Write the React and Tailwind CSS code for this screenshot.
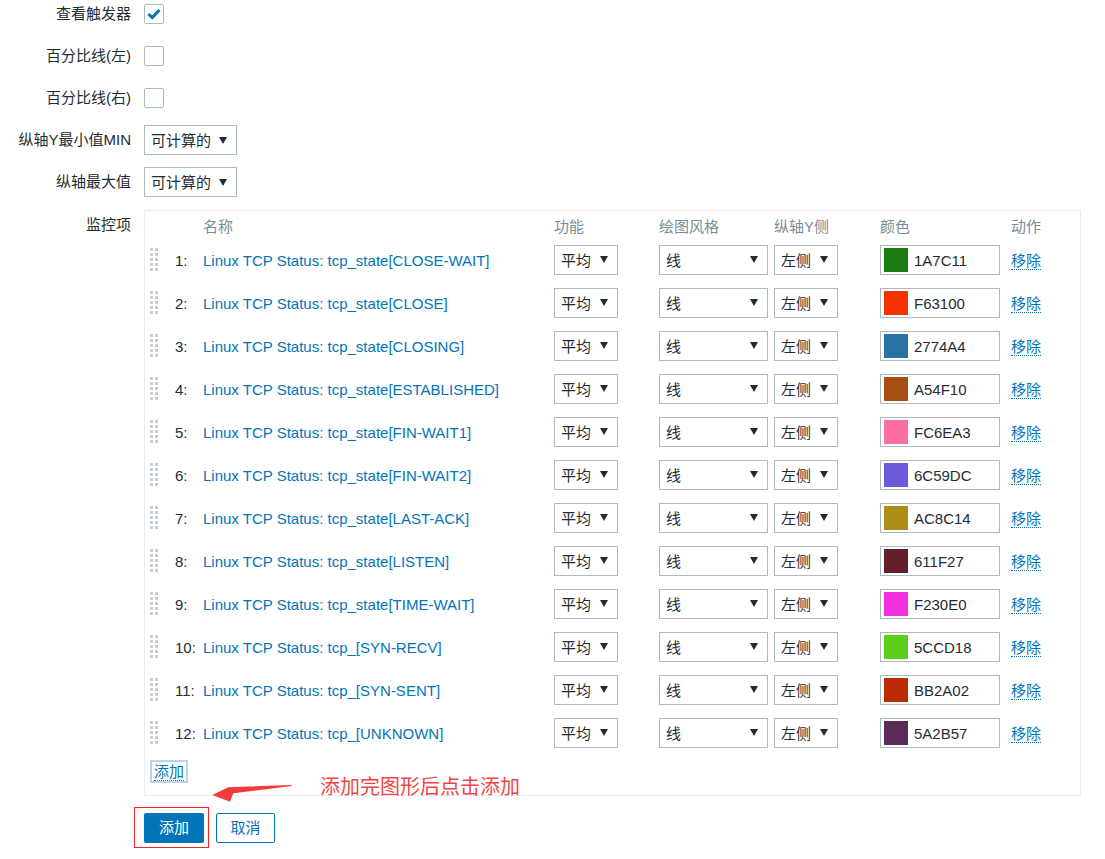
const ITEMS = [
  { n: 1, name: 'tcp_state[CLOSE-WAIT]', color: '1A7C11' },
  { n: 2, name: 'tcp_state[CLOSE]', color: 'F63100' },
  { n: 3, name: 'tcp_state[CLOSING]', color: '2774A4' },
  { n: 4, name: 'tcp_state[ESTABLISHED]', color: 'A54F10' },
  { n: 5, name: 'tcp_state[FIN-WAIT1]', color: 'FC6EA3' },
  { n: 6, name: 'tcp_state[FIN-WAIT2]', color: '6C59DC' },
  { n: 7, name: 'tcp_state[LAST-ACK]', color: 'AC8C14' },
  { n: 8, name: 'tcp_state[LISTEN]', color: '611F27' },
  { n: 9, name: 'tcp_state[TIME-WAIT]', color: 'F230E0' },
  { n: 10, name: 'tcp_[SYN-RECV]', color: '5CCD18' },
  { n: 11, name: 'tcp_[SYN-SENT]', color: 'BB2A02' },
  { n: 12, name: 'tcp_[UNKNOWN]', color: '5A2B57' },
]

function Arrow() {
  return (
    <svg width="8" height="7" viewBox="0 0 8 7" className="shrink-0">
      <polygon points="0,0 8,0 4,7" fill="#1f2c33" />
    </svg>
  )
}

function Select({ value, className }) {
  return (
    <div className={`flex h-[30px] items-center justify-between border border-[#acbbc2] bg-white pl-[6px] pr-[9px] text-[#1f2c33] ${className}`}>
      <span className="pt-[2px]">{value}</span>
      <Arrow />
    </div>
  )
}

function Checkbox({ checked }) {
  return (
    <div className="flex h-[20px] w-[20px] items-center justify-center rounded-[2px] border border-[#acbbc2] bg-white">
      {checked && (
        <svg width="14" height="12" viewBox="0 0 14 12">
          <path d="M1.5 6 L5.2 9.6 L12.5 2" fill="none" stroke="#0275b8" strokeWidth="3" />
        </svg>
      )}
    </div>
  )
}

function DragHandle() {
  return (
    <svg width="8" height="23" viewBox="0 0 8 23">
      {[0, 5, 10, 15, 20].map((y) => (
        <g key={y}>
          <rect x="0" y={y} width="3" height="3" fill="#c8d0d6" />
          <rect x="5" y={y} width="3" height="3" fill="#c8d0d6" />
        </g>
      ))}
    </svg>
  )
}

function FormRow({ label, children }) {
  return (
    <div className="flex h-[28px] items-center">
      <div className="w-[131px] shrink-0 text-right">{label}</div>
      <div className="ml-[13px] flex items-center">{children}</div>
    </div>
  )
}

const COLS = 'grid grid-cols-[25px_28px_351px_105px_115px_106px_131px_1fr]'

export default function App() {
  return (
    <div className="relative min-h-[859px] w-[1105px] bg-white text-[15px] leading-[20px] text-[#1f2c33] font-['Liberation_Sans','Noto_Sans_CJK_SC',sans-serif]">
      <div className="flex flex-col gap-[14px]">
        <FormRow label="查看触发器"><Checkbox checked /></FormRow>
        <FormRow label="百分比线(左)"><Checkbox /></FormRow>
        <FormRow label="百分比线(右)"><Checkbox /></FormRow>
        <FormRow label="纵轴Y最小值MIN"><Select value="可计算的" className="w-[93px]" /></FormRow>
        <FormRow label="纵轴最大值"><Select value="可计算的" className="w-[93px]" /></FormRow>
      </div>

      {/* 监控项 */}
      <div className="mt-[14px] flex">
        <div className="w-[131px] shrink-0 pt-[5px] text-right">监控项</div>
        <div className="ml-[13px] w-[937px] border border-[#ebeef0] pb-[12px] pl-[5px]">
          <div className={`${COLS} h-[27px] pt-[6px] text-[#768d99]`}>
            <div />
            <div />
            <div>名称</div>
            <div>功能</div>
            <div>绘图风格</div>
            <div>纵轴Y侧</div>
            <div>颜色</div>
            <div>动作</div>
          </div>
          {ITEMS.map((it) => (
            <div key={it.n} className={`${COLS} h-[43px] items-center`}>
              <div className="flex items-center"><DragHandle /></div>
              <div className="pt-[2px]">{it.n}:</div>
              <div className="pt-[2px] text-[#0275b8]">Linux TCP Status: {it.name}</div>
              <div><Select value="平均" className="w-[64px]" /></div>
              <div><Select value="线" className="w-[109px]" /></div>
              <div><Select value="左侧" className="w-[64px]" /></div>
              <div>
                <div className="flex h-[30px] w-[120px] items-center border border-[#acbbc2] bg-white pl-[3px]">
                  <div className="h-[24px] w-[24px]" style={{ backgroundColor: `#${it.color}` }} />
                  <span className="ml-[6px] pt-[2px]">{it.color}</span>
                </div>
              </div>
              <div className="pt-[2px]">
                <span className="border-b border-dotted border-[#0275b8] text-[#0275b8]">移除</span>
              </div>
            </div>
          ))}
          <div className="pt-[6px]">
            <span className="inline-block border-2 border-[#b7d6ee] px-[2px] leading-[19px] text-[#0275b8]">
              <span className="border-b border-dotted border-[#0275b8]">添加</span>
            </span>
          </div>
        </div>
      </div>

      {/* Buttons */}
      <div className="ml-[144px] mt-[17px] flex gap-[12px]">
        <div className="relative">
          <button className="h-[30px] w-[60px] rounded-[2px] bg-[#0275b8] text-white">添加</button>
          <div className="absolute -left-[10px] -top-[6px] h-[41px] w-[75px] border border-[#f22]" />
        </div>
        <button className="h-[30px] w-[59px] rounded-[2px] border border-[#0275b8] bg-white text-[#0275b8]">取消</button>
      </div>

      {/* Annotation */}
      <svg className="absolute left-[205px] top-[778px]" width="95" height="30" viewBox="0 0 95 30">
        <polygon points="86.7,7 23.3,9.3 7.3,17 25,23.7 28.3,15.3 86.7,8" fill="#f23a3a" />
      </svg>
      <div className="absolute left-[320px] top-[772px] text-[20px] leading-[28px] text-[#f04545] font-['Noto_Sans_CJK_SC',sans-serif]">
        添加完图形后点击添加
      </div>
    </div>
  )
}
